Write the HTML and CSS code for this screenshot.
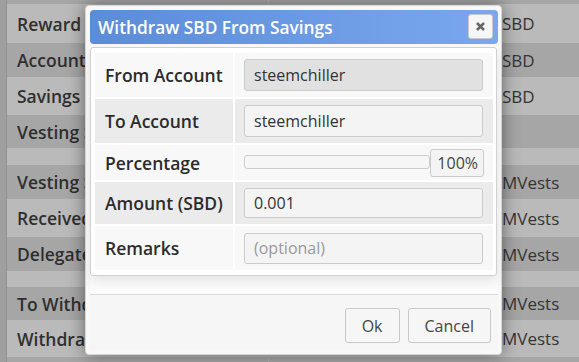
FILE: index.html
```html
<!DOCTYPE html>
<html>
<head>
<meta charset="utf-8">
<link rel="stylesheet" href="styles.css">
</head>
<body>
<div class="page">
  <div class="side"></div>
  <div class="sheet">
    <div class="row dark h-head"><div class="lab"></div><div class="val"></div></div>
    <div class="row light h39"><div class="lab"><span class="clip">Reward Balance</span></div><div class="val"><span class="unit">SBD</span></div></div>
    <div class="row dark h34"><div class="lab"><span class="clip">Account Balance</span></div><div class="val"><span class="unit">SBD</span></div></div>
    <div class="row light h38"><div class="lab"><span class="clip">Savings Balance</span></div><div class="val"><span class="unit">SBD</span></div></div>
    <div class="row dark h33"><div class="lab"><span class="clip">Vesting Shares</span></div><div class="val"></div></div>
    <div class="row light h17"><div class="lab"></div><div class="val"></div></div>
    <div class="row dark h34"><div class="lab"><span class="clip">Vesting Shares</span></div><div class="val"><span class="unit">MVests</span></div></div>
    <div class="row light h38"><div class="lab"><span class="clip">Received Shares</span></div><div class="val"><span class="unit">MVests</span></div></div>
    <div class="row dark h34"><div class="lab"><span class="clip">Delegated Shares</span></div><div class="val"><span class="unit">MVests</span></div></div>
    <div class="row light h16"><div class="lab"></div><div class="val"></div></div>
    <div class="row dark h33"><div class="lab"><span class="clip">To Withdraw</span></div><div class="val"><span class="unit">MVests</span></div></div>
    <div class="row light h37"><div class="lab"><span class="clip">Withdrawn</span></div><div class="val"><span class="unit">MVests</span></div></div>
    <div class="row dark h5"><div class="lab"></div><div class="val"></div></div>
  </div>
</div>
<div class="overlay"></div>
<div class="dialog">
  <div class="titlebar">
    <span class="title">Withdraw SBD From Savings</span>
    <button class="close" aria-label="Close"><svg width="9" height="9" viewBox="0 0 9 9"><path d="M1 1L8 8M8 1L1 8" stroke="#666" stroke-width="2.5" stroke-linecap="butt"/></svg></button>
  </div>
  <div class="content">
    <div class="panel">
      <div class="form">
        <div class="cell c-lab r1">From Account</div>
        <div class="cell c-val r1"><div class="input readonly">steemchiller</div></div>
        <div class="cell c-lab r2 alt">To Account</div>
        <div class="cell c-val r2 alt"><div class="input">steemchiller</div></div>
        <div class="cell c-lab r3">Percentage</div>
        <div class="cell c-val r3"><div class="slider"><div class="track"></div><div class="pct">100%</div></div></div>
        <div class="cell c-lab r4 alt">Amount (SBD)</div>
        <div class="cell c-val r4 alt"><div class="input short">0.001</div></div>
        <div class="cell c-lab r5">Remarks</div>
        <div class="cell c-val r5"><div class="input mid placeholder">(optional)</div></div>
      </div>
    </div>
  </div>
  <div class="buttonpane">
    <button class="btn">Ok</button>
    <button class="btn">Cancel</button>
  </div>
</div>
</body>
</html>
```
FILE: styles.css
```css
html, body {
  margin: 0;
  padding: 0;
}
body {
  width: 579px;
  height: 362px;
  overflow: hidden;
  font-family: "Open Sans", "Liberation Sans", sans-serif;
  background: #f9f9f9;
  position: relative;
}
.page {
  display: flex;
  height: 362px;
}
.side {
  width: 6px;
  background: #d4d4d4;
  border-right: 1px solid #c2c2c2;
}
.sheet {
  flex: 1;
  display: flex;
  flex-direction: column;
}
.row {
  flex: none;
  display: grid;
  grid-template-columns: 261px 1fr;
  align-items: center;
  color: #474747;
}
.row.light { background: #f9f9f9; }
.row.dark { background: #dedede; }
.h-head { height: 4px; }
.h39 { height: 39px; }
.h38 { height: 38px; }
.h37 { height: 37px; }
.h34 { height: 34px; }
.h33 { height: 33px; }
.h17 { height: 17px; }
.h16 { height: 16px; }
.h5 { height: 5px; }
.lab {
  padding-left: 10px;
  font-size: 17.5px;
  font-weight: 600;
  white-space: nowrap;
  height: 100%;
  display: flex;
  align-items: center;
  color: #3f3f3f;
}
.clip {
  display: block;
  max-width: 68px;
  overflow: hidden;
}
.val {
  height: 100%;
  border-left: 1px solid #ececec;
  display: flex;
  align-items: center;
  white-space: nowrap;
  font-size: 17px;
  padding-left: 233px;
}
.overlay {
  position: absolute;
  left: 0;
  top: 0;
  width: 579px;
  height: 362px;
  background: rgba(0, 0, 0, 0.25);
}
.dialog {
  position: absolute;
  left: 85px;
  top: 5px;
  width: 417px;
  height: 350px;
  box-sizing: border-box;
  border: 1px solid #d6d6d6;
  border-radius: 4px;
  background: #f8f8f8;
  padding: 4px 3px 4px 4px;
  display: flex;
  flex-direction: column;
  box-shadow: 0 0 18px rgba(0, 0, 0, 0.45);
}
.titlebar {
  height: 34px;
  flex: none;
  border-radius: 4px;
  background: linear-gradient(to right, #5b8cd8, #7aa7ef);
  display: flex;
  align-items: center;
  padding-left: 8px;
  position: relative;
  color: #fff;
  font-size: 17.3px;
  font-weight: 600;
}
.close {
  position: absolute;
  right: 5px;
  top: 4px;
  width: 25px;
  height: 25px;
  box-sizing: border-box;
  border: 1px solid #c8c8c8;
  border-radius: 3px;
  background: #f6f6f6;
  padding: 0;
  display: flex;
  align-items: center;
  justify-content: center;
}
.content {
  flex: 1;
  padding-top: 3px;
  background: #fbfbfb;
}
.panel {
  margin-right: 1px;
  border: 1px solid #d0d0d0;
  border-radius: 3px;
  background: #fff;
  padding: 5px 3px 5px 4px;
  box-shadow: 0 5px 12px rgba(0, 0, 0, 0.09);
}
.form {
  display: grid;
  grid-template-columns: 138px 1fr;
  grid-template-rows: 44px 44px 35px 42px 44px;
  gap: 2px;
}
.cell {
  background: #f8f8f8;
  display: flex;
  align-items: center;
}
.cell.alt {
  background: #ebebeb;
}
.c-lab {
  padding-left: 10px;
  font-size: 17.5px;
  font-weight: 600;
  color: #2b2b2b;
  white-space: nowrap;
}
.c-val {
  padding: 0 10px 0 9px;
}
.input {
  flex: 1;
  height: 32px;
  box-sizing: border-box;
  border: 1px solid #cbcbcb;
  border-radius: 3px;
  background: #f4f4f4;
  padding-left: 9px;
  display: flex;
  align-items: center;
  font-size: 16px;
  color: #333;
}
.input.readonly {
  background: #e1e1e1;
}
.input.short {
  height: 30px;
}
.input.mid {
  height: 31px;
}
.input.placeholder {
  color: #9a9a9a;
}
.slider {
  flex: 1;
  display: flex;
  align-items: center;
  margin-right: -1px;
}
.track {
  flex: 1;
  height: 14px;
  box-sizing: border-box;
  border: 1px solid #cdcdcd;
  border-radius: 3px;
  background: #f6f6f6;
  margin-top: -1px;
}
.pct {
  height: 28px;
  box-sizing: border-box;
  border: 1px solid #cbcbcb;
  border-radius: 3px;
  background: #f4f4f4;
  padding: 0 5px 0 6px;
  display: flex;
  align-items: center;
  font-size: 16px;
  color: #444;
}
.buttonpane {
  flex: none;
  height: 56px;
  box-sizing: border-box;
  border-top: 1px solid #dcdcdc;
  background: #f6f6f6;
  padding: 13px 7px 0 0;
  display: flex;
  justify-content: flex-end;
  align-items: flex-start;
  gap: 8px;
}
.btn {
  height: 35px;
  box-sizing: border-box;
  border: 1px solid #c8c8c8;
  border-radius: 3px;
  background: #f6f6f6;
  padding: 0 16px;
  font-family: "Open Sans", "Liberation Sans", sans-serif;
  font-size: 16px;
  color: #454545;
}
```
